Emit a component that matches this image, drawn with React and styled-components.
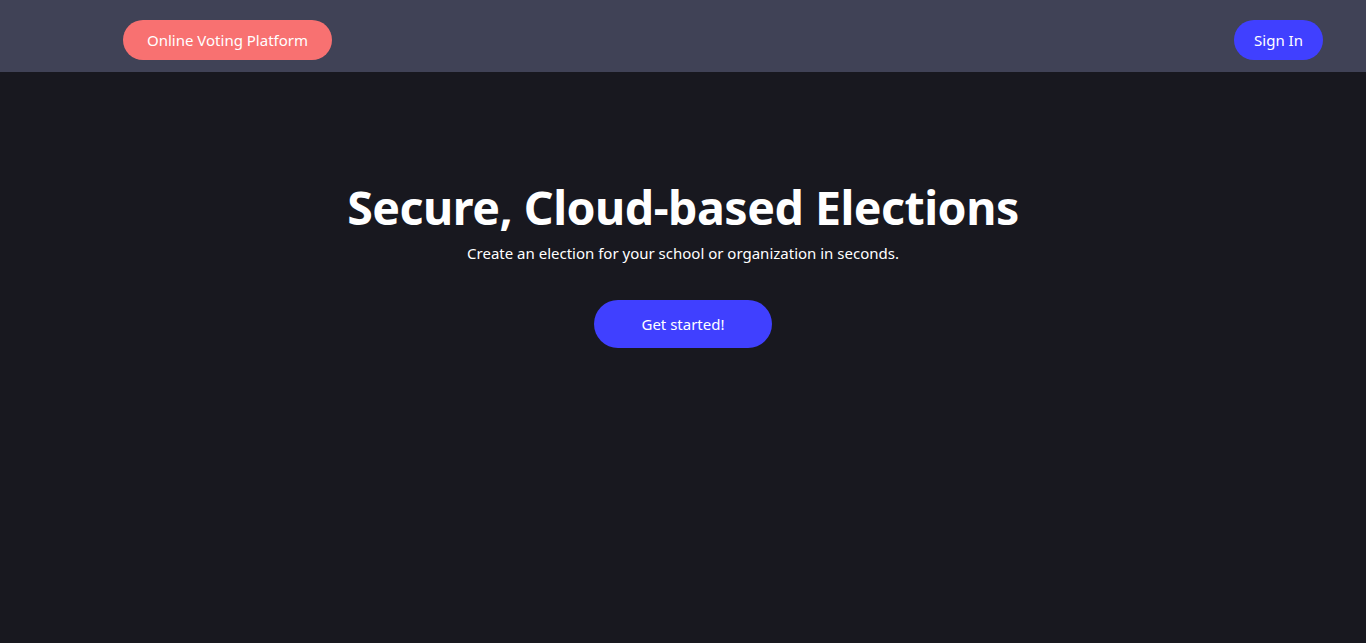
import React from "react";
import styled, { createGlobalStyle } from "styled-components";

const Global = createGlobalStyle`
  html, body { margin: 0; padding: 0; background: #18181f; }
  body { font-family: "Segoe UI", "Noto Sans", sans-serif; color: #fff; }
  #root { min-height: 643px; }
`;

const Page = styled.div`
  min-height: 643px;
  background: #18181f;
  display: flex;
  flex-direction: column;
`;

const Header = styled.header`
  height: 72px;
  background: #404256;
  display: flex;
  align-items: flex-start;
  justify-content: space-between;
  padding: 20px 43px 0 123px;
  box-sizing: border-box;
`;

const Pill = styled.button`
  height: 40px;
  width: ${(p) => p.$w}px;
  border: none;
  border-radius: 20px;
  background: ${(p) => p.$bg};
  color: #fff;
  font-family: inherit;
  font-size: 15px;
  padding: 0;
  cursor: pointer;
`;

const Hero = styled.main`
  display: flex;
  flex-direction: column;
  align-items: center;
  padding-top: 103px;
`;

const Title = styled.h1`
  margin: 0 0 3px;
  font-size: 46.5px;
  font-weight: 700;
  line-height: 64px;
  letter-spacing: -0.5px;
`;

const Sub = styled.p`
  margin: 0;
  font-size: 15px;
  line-height: 22px;
`;

const Cta = styled.button`
  margin-top: 36px;
  width: 178px;
  height: 48px;
  border: none;
  border-radius: 24px;
  background: #4040ff;
  color: #fff;
  font-family: inherit;
  font-size: 15px;
  cursor: pointer;
`;

export default function App() {
  return (
    <>
      <Global />
      <Page>
        <Header>
          <Pill $w={209} $bg="#f87171">Online Voting Platform</Pill>
          <Pill $w={89} $bg="#4040ff">Sign In</Pill>
        </Header>
        <Hero>
          <Title>Secure, Cloud-based Elections</Title>
          <Sub>Create an election for your school or organization in seconds.</Sub>
          <Cta>Get started!</Cta>
        </Hero>
      </Page>
    </>
  );
}
